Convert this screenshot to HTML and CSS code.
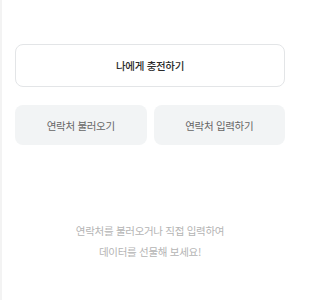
FILE: index.html
```html
<!DOCTYPE html>
<html lang="ko">
<head>
<meta charset="utf-8">
<link rel="stylesheet" href="styles.css">
</head>
<body>
<div class="page">
  <button class="btn-primary">나에게 충전하기</button>
  <div class="row">
    <button class="btn-sub">연락처 불러오기</button>
    <button class="btn-sub">연락처 입력하기</button>
  </div>
  <p class="desc">연락처를 불러오거나 직접 입력하여<br>데이터를 선물해 보세요!</p>
</div>
</body>
</html>
```
FILE: styles.css
```css
html, body {
  margin: 0;
  padding: 0;
  background: #fff;
  overflow: hidden;
}
body {
  font-family: "Noto Sans CJK KR", "Noto Sans", sans-serif;
}
.page {
  box-sizing: border-box;
  width: 300px;
  height: 300px;
  padding: 44px 15px 0 13px;
  border-left: 2px solid #f3f3f3;
}
button {
  font-family: inherit;
  cursor: pointer;
  margin: 0;
}
.btn-primary {
  display: block;
  width: 100%;
  height: 43px;
  background: #fff;
  border: 1px solid #e3e5e7;
  border-radius: 8px;
  font-size: 10.5px;
  font-weight: 500;
  color: #2b2b2b;
  letter-spacing: -0.3px;
}
.row {
  display: flex;
  gap: 7px;
  margin-top: 18px;
}
.btn-sub {
  flex: 1;
  height: 40px;
  background: #f2f4f5;
  border: none;
  border-radius: 8px;
  font-size: 10.5px;
  color: #666;
  letter-spacing: -0.3px;
}
.desc {
  margin: 75px 0 0 0;
  text-align: center;
  font-size: 10.5px;
  line-height: 21px;
  color: #b4b4b4;
  letter-spacing: -0.3px;
}
```
